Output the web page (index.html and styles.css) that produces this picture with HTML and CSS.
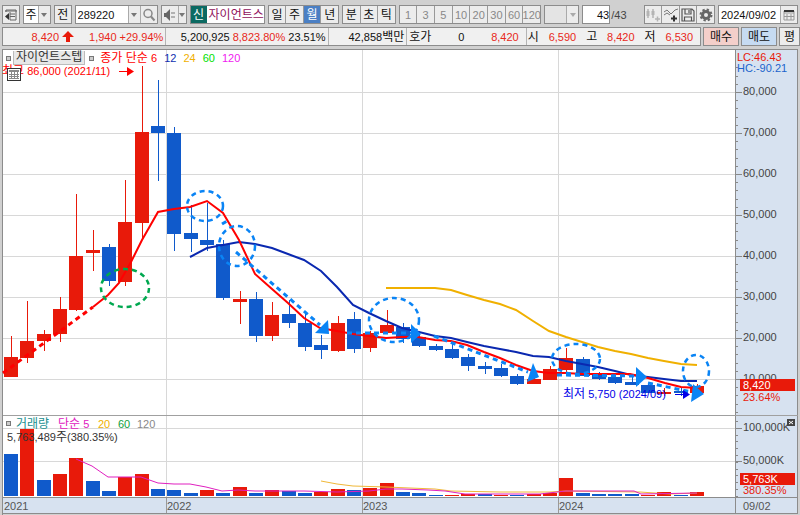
FILE: index.html
```html
<!DOCTYPE html>
<html lang="ko">

<head>
    <meta charset="UTF-8">
    <meta name="viewport" content="width=device-width, initial-scale=1.0">
    <title>자이언트스텝 주식 차트</title>
    <link rel="stylesheet" href="styles.css">
</head>

<body>
    <header class="toolbar">
        <button type="button" class="btn" aria-label="패널">
            <svg width="14" height="14" viewBox="0 0 14 14"><path d="M2 4V2h10v10H6V4M1 3h12M6 6h5M6 8.500h5" fill="none" stroke="#666" /><path d="M5 5v7L1 8.500z" fill="#333" /></svg>
        </button>
        <div class="combo period">
            <select aria-label="주기"><option>주</option></select>
            <span class="arrow"></span>
        </div>
        <button type="button" class="btn">전</button>
        <div class="combo code">
            <input type="text" value="289220" aria-label="종목코드">
            <span class="arrow"></span>
            <button type="button" class="inner" aria-label="검색">
                <svg width="14" height="14" viewBox="0 0 14 14"><circle cx="6" cy="5.500" r="4" fill="none" stroke="#888" stroke-width="1.500" /><path d="M9 8.500l3.500 4" stroke="#888" stroke-width="2" /></svg>
            </button>
        </div>
        <div class="combo sound">
            <button type="button" class="inner" aria-label="소리">
                <svg width="14" height="14" viewBox="0 0 14 14"><path d="M1 5h2l4-4v12L3 9H1z" fill="#666" /><path d="M9 4v2M9 8v2M11 4v2M11 8v2" stroke="#777" /></svg>
            </button>
            <span class="arrow small"></span>
        </div>
        <div class="stock"><span class="badge">신</span><span class="name">자이언트스</span></div>
        <div class="group days">
            <button type="button">일</button>
            <button type="button">주</button>
            <button type="button" class="active">월</button>
            <button type="button">년</button>
        </div>
        <div class="group ticks">
            <button type="button">분</button>
            <button type="button">초</button>
            <button type="button">틱</button>
        </div>
        <div class="group minutes">
            <button type="button">1</button>
            <button type="button">3</button>
            <button type="button">5</button>
            <button type="button">10</button>
            <button type="button">20</button>
            <button type="button">30</button>
            <button type="button">60</button>
            <button type="button">120</button>
        </div>
        <div class="combo off">
            <select aria-label="분 단위" disabled><option></option></select>
            <span class="arrow"></span>
        </div>
        <div class="count">
            <input type="text" id="count" value="43">
            <label for="count">/43</label>
        </div>
        <div class="group tools">
            <button type="button" aria-label="봉 추가">
                <svg width="16" height="16" viewBox="0 0 16 16"><path d="M3 2v9M8 2v9M10 12h5M12.500 9.500v5" stroke="#b4b4b4" stroke-width="1.500" /><path d="M1.500 4h3v5h-3zM6.500 4h3v4h-3z" fill="#b4b4b4" /></svg>
            </button>
            <button type="button" aria-label="지표 추가">
                <svg width="16" height="16" viewBox="0 0 16 16"><path d="M1 5l3-2 4 4 4-4 3-1M1 8l3-2 3 2" fill="none" stroke="#777" /><path d="M8 11.500h6M11 8.500v6" stroke="#333" stroke-width="2" /></svg>
            </button>
            <button type="button" aria-label="저장">
                <svg width="16" height="16" viewBox="0 0 16 16"><path d="M2 2h10l2 2v10H2zM5 2v5h6V2M4.500 14V10h7v4M9 3v3" fill="none" stroke="#555" stroke-width="1.200" /></svg>
            </button>
            <button type="button" aria-label="설정">
                <svg width="16" height="16" viewBox="0 0 16 16"><circle cx="8" cy="8" r="3.500" fill="none" stroke="#666" stroke-width="3" /><circle cx="8" cy="8" r="5.500" fill="none" stroke="#666" stroke-width="2" stroke-dasharray="2.300 2.020" /></svg>
            </button>
        </div>
        <div class="combo date">
            <input type="text" value="2024/09/02" aria-label="날짜">
            <button type="button" class="inner" aria-label="달력">
                <svg width="14" height="14" viewBox="0 0 14 14"><path d="M2 3h10v9H2zM2 5h10M2 8.500h10M5 6v6M9 6v6" fill="none" stroke="#999" /><path d="M2 3h10" stroke="#333" stroke-width="2" /></svg>
            </button>
        </div>
    </header>

    <section class="quote">
        <div class="cells">
            <div class="cell up price">
                <span>8,420</span>
                <svg width="12" height="12" viewBox="0 0 12 12"><path d="M6 0l6 6H8v5H4V6H0z" fill="#e81a0a" /></svg>
                <span class="diff">1,940</span>
                <span>+29.94%</span>
            </div>
            <div class="cell"><span>5,200,925</span><span class="up">8,823.80%</span><span>23.51%</span></div>
            <div class="cell amount"><span>42,858<b>백만</b></span></div>
            <div class="cell ask"><b>호가</b><span>0</span><span class="up">8,420</span></div>
            <div class="cell ohl">
                <b>시</b><span class="up">6,590</span>
                <b>고</b><span class="up">8,420</span>
                <b>저</b><span class="up">6,530</span>
            </div>
        </div>
        <button type="button" class="buy">매수</button>
        <button type="button" class="sell">매도</button>
        <button type="button" class="avg">평</button>
    </section>

    <main class="chart">
        <svg id="chart" viewBox="0 49 800 466"></svg>
        <div class="legend">
            <i></i><span class="tab">자이언트스텝</span><i></i>
            <span class="ma6">종가 단순 <em>6</em></span>
            <em class="ma12">12</em>
            <em class="ma24">24</em>
            <em class="ma60">60</em>
            <em class="ma120">120</em>
        </div>
    </main>

    <script src="chart.js"></script>
</body>

</html>
```

FILE: styles.css
```css
* {
    box-sizing: border-box;
}

body {
    margin: 0;
    background-color: #d0d0d0;
    font-family: "Liberation Sans", "Noto Sans CJK KR", sans-serif;
    font-size: 11px;
    line-height: 14px;
    color: #111;
}

button,
input,
select {
    font-family: inherit;
    font-size: 12px;
    line-height: 14px;
    color: #111;
    margin: 0;
    padding: 0;
    border: none;
    border-radius: 0;
    background-color: #ececec;
}

button {
    display: flex;
    align-items: center;
    justify-content: center;
    white-space: nowrap;
}

svg {
    display: block;
    flex: none;
}

b {
    font-size: 12px;
    font-weight: normal;
}

em {
    font-size: 11px;
    font-style: normal;
}

/* toolbar */
.toolbar {
    display: flex;
    align-items: stretch;
    gap: 3px;
    height: 27px;
    padding: 5px 2px 3px 2px;
}

.btn {
    width: 18px;
    border: 1px solid #8c8c8c;
}

.combo {
    display: flex;
    border: 1px solid #8c8c8c;
    background-color: #fff;
}

.combo select,
.combo input {
    appearance: none;
    flex: 1;
    min-width: 0;
    padding-left: 2px;
    background-color: #fff;
}

.combo input {
    font-size: 11px;
}

.combo .inner {
    width: 17px;
    border-left: 1px solid #aaa;
}

.arrow {
    display: flex;
    align-items: center;
    justify-content: center;
    width: 12px;
    background-color: #ececec;
    border-left: 1px solid #aaa;
}

.arrow::after {
    content: "";
    border: 3px solid transparent;
    border-top: 4px solid #777;
    border-bottom: none;
}

.arrow.small {
    width: 8px;
}

.period {
    width: 29px;
}

.code {
    width: 83px;
}

.sound .inner {
    width: 16px;
    border: none;
}

.stock {
    display: flex;
    width: 77px;
    border: 1px solid #8c8c8c;
    background-color: #fff;
    font-size: 12px;
    line-height: 18px;
    overflow: hidden;
}

.badge {
    width: 16px;
    background-color: #0c6a62;
    color: #fff;
    text-align: center;
    flex: none;
}

.name {
    padding-left: 2px;
    color: #90105c;
    white-space: nowrap;
}

.group {
    display: flex;
    border: 1px solid #8c8c8c;
    background-color: #999;
    gap: 1px;
}

.group button {
    flex: 1;
    min-width: 0;
}

.group .active {
    background-color: #4a7fc4;
    color: #fff;
}

.days {
    width: 73px;
}

.ticks {
    width: 55px;
}

.minutes {
    width: 146px;
}

.minutes button {
    font-size: 11px;
    color: #888;
}

.off {
    width: 36px;
}

.off select,
.off {
    background-color: #e4e4e4;
}

.off .arrow::after {
    border-top-color: #aaa;
}

.count {
    display: flex;
    align-items: center;
    width: 60px;
    margin-right: auto;
    font-size: 11px;
}

.count input {
    width: 28px;
    height: 19px;
    border: 1px solid #8c8c8c;
    background-color: #fff;
    font-size: 11px;
    text-align: right;
}

.count label {
    padding-left: 1px;
    color: #444;
}

.tools {
    width: 73px;
}

.date {
    width: 80px;
}

/* quote line */
.quote {
    display: flex;
    gap: 2px;
    height: 22px;
    padding: 0 0 3px 2px;
}

.cells {
    flex: 1;
    display: grid;
    grid-template-columns: 164fr 163fr 79fr 120fr 174fr;
    border: 1px solid #8c8c8c;
    background-color: #f0f0f0;
}

.cell {
    display: flex;
    align-items: center;
    justify-content: flex-end;
    gap: 3px;
    padding-right: 2px;
    min-width: 0;
    white-space: nowrap;
    border-right: 1px solid #b4b4b4;
}

.up {
    color: #e8281a;
}

.diff {
    padding-left: 12px;
}

.cell.ask {
    justify-content: space-between;
    padding: 0 7px 0 2px;
}

.cell.ohl {
    justify-content: space-between;
    padding: 0 7px 0 1px;
    border: none;
}

.quote button {
    width: 36px;
    border: 1px solid #8c8c8c;
}

.quote .buy {
    background-color: #f4cfca;
}

.quote .sell {
    background-color: #c6dbf2;
}

.quote .avg {
    width: 21px;
}

/* chart */
.chart {
    position: relative;
    background-color: #fff;
}

#chart {
    width: 100%;
    height: auto;
}

#chart .k {
    font-size: 12px;
}

.legend {
    position: absolute;
    top: 2px;
    left: 6px;
    display: flex;
    align-items: center;
    gap: 7px;
    font-size: 12px;
    white-space: nowrap;
}

.legend i {
    width: 5px;
    height: 5px;
    border: 1px solid #777;
    background-color: #ccc;
}

.tab {
    padding: 0 2px;
    margin: 0 -3px 0 -5px;
    border: 1px solid #bbb;
    border-top: none;
    background-color: #e8e8e8;
    line-height: 13px;
    color: #333;
}

.legend .ma6 {
    margin-left: -1px;
    color: #f00;
}

.ma12 {
    color: #1030b0;
}

.ma24 {
    color: #f0b000;
}

.ma60 {
    color: #00e000;
}

.ma120 {
    color: #f020f0;
}
```

FILE: chart.js
```js
const RED = "#e81a0a";
const BLUE = "#105acb";
const MARK = "#0a84f5";
const AXIS = 735;

// high, body top, body bottom, low, colour
const candles = [
    [336, 357, 377, 377, "r"], [301, 341, 358, 363, "r"], [330, 334, 341, 351, "r"],
    [297, 309, 334, 342, "r"], [194, 256, 310, 311, "r"], [230, 250, 253, 271, "r"],
    [244, 247, 281, 286, "b"], [180, 222, 282, 286, "r"], [66, 132, 223, 238, "r"],
    [80, 126, 133, 181, "b"], [127, 133, 234, 251, "b"], [205, 233, 239, 252, "b"],
    [203, 240, 245, 251, "b"], [240, 244, 298, 300, "b"], [291, 299, 302, 324, "r"],
    [292, 299, 336, 342, "b"], [302, 315, 336, 341, "r"], [300, 314, 323, 328, "b"],
    [312, 323, 347, 351, "b"], [335, 345, 350, 359, "b"], [316, 323, 351, 352, "r"],
    [312, 319, 349, 353, "b"], [331, 333, 348, 352, "r"], [310, 325, 333, 334, "r"],
    [323, 327, 339, 343, "b"], [334, 337, 346, 347, "b"], [344, 346, 350, 351, "b"],
    [343, 349, 358, 359, "b"], [354, 357, 366, 371, "b"], [362, 366, 369, 374, "b"],
    [364, 368, 376, 377, "b"], [374, 376, 384, 385, "b"], [377, 379, 384, 384, "r"],
    [366, 369, 380, 380, "r"], [348, 358, 370, 373, "r"], [357, 359, 376, 376, "b"],
    [372, 375, 379, 380, "b"], [374, 377, 383, 384, "b"], [377, 382, 385, 385, "b"],
    [384, 385, 393, 393, "b"], [388, 392, 394, 396, "r"], [388, 391, 393, 396, "b"],
    [384, 386, 393, 397, "r"]
];

const volumes = [
    454, 429, 480, 474, 458, 481, 491, 477, 474, 489, 490, 493, 490, 493, 487, 493, 490, 491, 493, 492, 489, 490,
    488, 483, 492, 493, 495, 495, 494, 494, 495, 495, 494, 493, 478, 493, 494, 494, 494, 495, 492, 495, 492
];
const volumeColors = "brbrrbbrrbbbrbrbrbbrrbrrbbbrrbrbrrrbbbbrrbr";

const ma6 = "93,307 108,295 119,283 131,262 142,240 158,212 174,209 190,207 207,201 223,213 239,240 255,274 272,289 288,303 304,318 320,328 337,331 353,334 369,336 386,338 402,337 418,337 435,340 451,341 467,345 484,352 500,358 516,365 533,371 549,373 566,373 582,374 630,374 648,378 665,383 681,387 697,388";
const ma12 = "190,257 207,248 223,245 239,242 255,244 272,248 288,254 304,260 321,271 337,287 353,305 369,313 386,321 402,328 419,332 435,336 451,338 467,342 484,346 500,349 516,352 533,356 549,357 566,361 582,364 598,367 615,371 631,375 648,377 664,379 681,381 697,381";
const ma24 = "386,288 435,288 451,290 467,295 484,300 500,304 516,310 533,321 549,331 566,337 582,342 598,347 615,351 631,354 648,358 664,361 681,364 697,365";
const volMa5 = "76,459 92,466 108,477 141,477 158,483 174,484 190,484 206,487 222,491 238,490 255,491 304,491 337,492 369,491 386,489 402,489 428,490 445,491 465,494 540,494 566,491 634,491 641,494 697,493";
const volMa20 = "321,481 337,484 353,486 386,487 410,488 435,489 451,491 500,492 550,492 566,491 640,492 670,494 697,493";

let out = "";

function rect(x, y, w, h, fill) {
    out += `<rect x="${x}" y="${y}" width="${w}" height="${h}" fill="${fill}" shape-rendering="crispEdges"/>`;
}

function text(x, y, fill, content) {
    out += `<text x="${x}" y="${y}" fill="${fill}" font-size="11">${content}</text>`;
}

function line(points, color, width) {
    out += `<polyline points="${points}" fill="none" stroke="${color}" stroke-width="${width}"/>`;
}

function dashed(points, color) {
    out += `<polyline points="${points}" fill="none" stroke="${color}" stroke-width="3" stroke-dasharray="5 4"/>`;
}

function circle(cx, cy, rx, ry, color) {
    out += `<ellipse cx="${cx}" cy="${cy}" rx="${rx}" ry="${ry}" fill="none" stroke="${color}" stroke-width="2.5" stroke-dasharray="5 4"/>`;
}

function head(points, color) {
    out += `<polygon points="${points}" fill="${color}"/>`;
}

function centerOf(i) {
    return Math.round(11 + i * 16.33);
}

// frame and grid
rect(0, 49, 800, 466, "#d0d0d0");
rect(2, 49, 796, 466, "#8c8c8c");
rect(3, 50, AXIS - 3, 447, "#fff");
rect(AXIS + 1, 50, 61, 447, "#d7e2f0");
for (let i = 0; i < 8; i++) {
    rect(3, 92 + i * 41, AXIS - 3, 1, "#d8d8d8");
}
rect(3, 428, AXIS - 3, 1, "#d8d8d8");
rect(3, 461, AXIS - 3, 1, "#d8d8d8");
[166, 362, 558].forEach(x => rect(x, 50, 1, 447, "#d8d8d8"));
rect(3, 415, 795, 1, "#a0a0a0");
rect(3, 498, AXIS - 3, 15, "#d7e2f0");
rect(AXIS + 1, 498, 61, 15, "#d7e2f0");
rect(3, 514, 795, 1, "#d0d0d0");

// price axis
for (let y = 67.4; y < 412; y += 8.2) {
    rect(AXIS + 1, Math.round(y), 2, 1, "#888");
}
for (let i = 0; i < 8; i++) {
    rect(AXIS + 1, 92 + i * 41, 6, 1, "#888");
    text(743, 95 + i * 41, "#444", `${80 - i * 10},000`);
}
text(737, 61, RED, "LC:46.43");
text(737, 72, "#2064cc", "HC:-90.21");
rect(740, 379, 55, 12, RED);
text(743, 389, "#fff", "8,420");
text(743, 401, RED, "23.64%");

// candles
candles.forEach(([high, top, bottom, low, c], i) => {
    const color = c === "r" ? RED : BLUE;
    const x = centerOf(i);
    rect(x, high, 1, low - high, color);
    rect(x - 7, top, 14, bottom - top, color);
});

// volume bars
volumes.forEach((top, i) => {
    rect(centerOf(i) - 7, top, 14, 496 - top, volumeColors[i] === "r" ? RED : BLUE);
});

line(ma24, "#f0b000", 2);
line(ma12, "#0a28b0", 2);
line(ma6, "#f00", 2);
out += `<line x1="3" y1="373" x2="93" y2="307" stroke="#f00" stroke-width="3" stroke-dasharray="5 4"/>`;
line(volMa20, "#f0b838", 1);
line(volMa5, "#e020c0", 1);

// markings
circle(125, 288, 24, 19, "#00a850");
circle(205, 206, 18, 15, MARK);
circle(237, 246, 18, 20, MARK);
circle(394, 320, 25, 22, MARK);
circle(576, 359, 24, 15, MARK);
circle(696, 371, 13, 16, MARK);
dashed("222,224 227,221", MARK);
dashed("236,252 320,325", MARK);
dashed("347,333 412,333", MARK);
dashed("434,336 528,372", MARK);
dashed("557,375 636,376", MARK);
dashed("648,383 692,392", MARK);
head("328,320 315,333 329,334", MARK);
head("411,324 421,334 411,343", MARK);
head("533,363 527,382 539,377", MARK);
head("636,367 647,377 636,387", MARK);
head("693,384 704,394 691,402", MARK);

// high and low notes
text(2, 75, "#f00", `<tspan class="k">최고</tspan> 86,000 (2021/11)`);
rect(119, 71, 10, 1, "#f00");
head("127,67 134,71.500 127,76", "#f00");
text(563, 398, "#0000e8", `<tspan class="k">최저</tspan> 5,750 (2024/09)`);
rect(675, 394, 9, 1, "#0000e8");
head("683,390 690,394.500 683,399", "#0000e8");
rect(7, 68, 14, 13, "#333");
rect(8, 69, 12, 11, "#fff");
rect(9, 70, 10, 2, "#888");
[11, 14, 17].forEach(x => rect(x, 72, 1, 7, "#888"));
[74, 76, 78].forEach(y => rect(9, y, 10, 1, "#888"));

// volume axis
for (let y = 421; y < 496; y += 6.8) {
    rect(AXIS + 1, Math.round(y), 2, 1, "#888");
}
rect(AXIS + 1, 428, 6, 1, "#888");
rect(AXIS + 1, 461, 6, 1, "#888");
text(743, 431, "#444", "100,000K");
text(743, 464, "#444", "50,000K");
rect(787, 419, 8, 7, "#444");
out += `<path d="M789 421l4 3M793 421l-4 3" stroke="#fff"/>`;
rect(740, 473, 55, 12, RED);
text(743, 483, "#fff", "5,763K");
text(743, 494, RED, "380.35%");

// volume legend
rect(6, 421, 5, 5, "#777");
rect(7, 422, 3, 3, "#ccc");
text(16, 428, "#209090", `<tspan class="k">거래량</tspan>`);
text(58, 428, "#e020c0", `<tspan class="k">단순</tspan> 5`);
text(98, 428, "#f0b000", "20");
text(118, 428, "#10a040", "60");
text(137, 428, "#888", "120");
text(7, 441, "#333", `5,763,489<tspan class="k">주</tspan>(380.35%)`);

// dates
text(4, 510, "#555", "2021");
text(167, 510, "#555", "2022");
text(363, 510, "#555", "2023");
text(559, 510, "#555", "2024");
text(743, 510, "#555", "09/02");
[166, 362, 558].forEach(x => rect(x, 498, 1, 15, "#999"));

document.getElementById("chart").innerHTML = out;
```
